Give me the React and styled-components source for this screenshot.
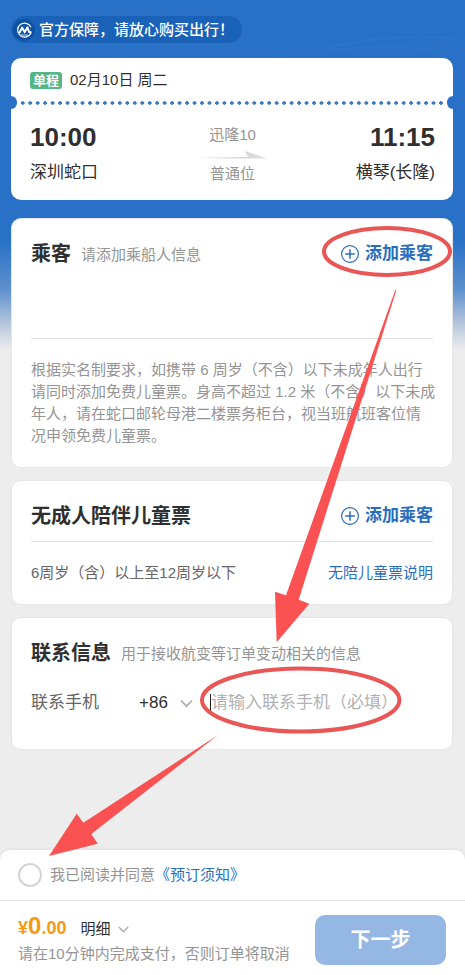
import React, { useState } from "react";
import styled, { createGlobalStyle } from "styled-components";

const blue = "#2871c7";
const linkBlue = "#2a6ebb";
const muted = "#949494";
const ink = "#2f2f2f";

const GlobalStyle = createGlobalStyle`
  *, *::before, *::after { box-sizing: border-box; }
  body {
    margin: 0;
    background: #ededed;
    color: ${ink};
    font-family: "Liberation Sans", "Noto Sans CJK SC", sans-serif;
    font-size: 15px;
    line-height: 22px;
  }
  h2, p { margin: 0; }
  button, input, select { font: inherit; color: inherit; margin: 0; padding: 0; border: 0; background: none; }
  button { cursor: pointer; }
  a { color: ${linkBlue}; text-decoration: none; }
`;

const Page = styled.div`
  position: relative;
  display: flex;
  flex-direction: column;
  min-height: 100vh;
  background: linear-gradient(${blue} 0, ${blue} 240px, #5f91cd 290px, #b9c8dc 325px, #ededed 350px);
`;

const Waves = styled.svg`
  position: absolute;
  top: 0;
  right: 0;
  width: 260px;
  height: 60px;
`;

const Content = styled.main`
  position: relative;
  flex: 1;
  display: flex;
  flex-direction: column;
  padding: 16px 12px 24px 11px;
`;

const Guarantee = styled.div`
  align-self: flex-start;
  display: flex;
  align-items: center;
  gap: 4px;
  height: 27px;
  padding-right: 8px;
  border-radius: 14px;
  background: #1a62b8;
  color: #fff;
  font-weight: 500;
`;

const Logo = styled.svg`
  width: 24px;
  height: 24px;
`;

const Ticket = styled.section`
  margin-top: 15px;
  padding-bottom: 9px;
  border-radius: 10px;
  background: #fff;
`;

const TripDate = styled.div`
  display: flex;
  align-items: center;
  gap: 8px;
  height: 38px;
  padding: 6px 19px 0;
`;

const Tag = styled.span`
  height: 17px;
  padding: 0 3px;
  border-radius: 3px;
  background: #55b584;
  color: #fff;
  font-size: 13px;
  font-weight: 700;
  line-height: 17px;
`;

const Perforation = styled.div`
  display: flex;
  align-items: center;
  justify-content: space-between;
  height: 13px;
  &::before, &::after {
    content: "";
    width: 6px;
    height: 13px;
    background: ${blue};
  }
  &::before { border-radius: 0 7px 7px 0; }
  &::after { border-radius: 7px 0 0 7px; }
`;

const Dots = styled.div`
  flex: 1;
  height: 4px;
  margin: 0 2px;
  background: radial-gradient(circle at center, #3a78c0 50%, transparent 60%) 0 0 / calc(100% / 57) 4px;
  background: radial-gradient(circle 2px at center, #3a78c0 75%, transparent) 0 0 / calc(100% / 57) 4px;
`;

const Route = styled.div`
  display: grid;
  grid-template-columns: 1fr 70px 1fr;
  padding: 10px 18px 0 19px;
`;

const Stop = styled.div`
  text-align: ${(p) => (p.$end ? "right" : "left")};
`;

const Time = styled.div`
  font-size: 26px;
  font-weight: 700;
  line-height: 36px;
`;

const Port = styled.div`
  font-size: 17px;
  line-height: 36px;
`;

const Vessel = styled.div`
  display: flex;
  flex-direction: column;
  align-items: center;
  justify-content: space-between;
  padding: 5px 0 6px;
  color: ${muted};
`;

const RouteArrow = styled.svg`
  width: 70px;
  height: 8px;
`;

const Panel = styled.section`
  margin-top: ${(p) => p.$gap}px;
  padding: 21px 19px ${(p) => p.$bottom}px;
  border: 1px solid #e4e6e8;
  border-radius: 10px;
  background: #fff;
`;

const PanelHead = styled.header`
  display: flex;
  align-items: center;
  gap: 10px;
  height: 28px;
`;

const Title = styled.h2`
  font-size: 20px;
  line-height: 28px;
  font-weight: 700;
`;

const Hint = styled.span`
  padding-top: 2px;
  color: ${muted};
`;

const AddButton = styled.button`
  display: flex;
  align-items: center;
  gap: 5px;
  margin-left: auto;
  color: ${linkBlue};
  font-size: 17px;
  font-weight: 700;
  line-height: 28px;
`;

const PlusIcon = styled.svg`
  width: 20px;
  height: 20px;
`;

const Divider = styled.hr`
  height: 1px;
  margin: ${(p) => p.$top}px 0 0;
  border: 0;
  background: #e1e1e1;
`;

const Notice = styled.p`
  margin-right: -3px;
  padding-top: 20px;
  color: ${muted};
  span { white-space: nowrap; }
`;

const AgeRow = styled.div`
  display: flex;
  justify-content: space-between;
  padding-top: 20px;
  color: #666;
`;

const ContactRow = styled.div`
  display: flex;
  align-items: center;
  height: 28px;
  margin-top: 22px;
  font-size: 17px;
  label { width: 108px; color: #666; }
`;

const CodePicker = styled.div`
  display: flex;
  align-items: center;
  width: 54px;
  margin-right: 17px;
`;

const CodeSelect = styled.select`
  appearance: none;
  flex: none;
  width: 54px;
  margin-right: -13px;
  outline: none;
`;

const Chevron = styled.svg`
  flex: none;
  width: ${(p) => (p.$small ? 11 : 13)}px;
  height: 9px;
  pointer-events: none;
`;

const PhoneInput = styled.input`
  flex: 1;
  min-width: 0;
  height: 18px;
  border-left: 1px solid #222;
  outline: none;
  &::placeholder { color: #b2b2b2; opacity: 1; }
`;

const Footer = styled.footer`
  position: sticky;
  bottom: 0;
  border-radius: 10px 10px 0 0;
  background: #fff;
  box-shadow: 0 -1px 4px rgba(0, 0, 0, 0.06);
`;

const Agreement = styled.div`
  display: flex;
  align-items: center;
  height: 51px;
  padding-left: 18px;
  border-bottom: 1px solid #e4e4e4;
  color: ${muted};
  label { padding-left: 8px; }
  a { color: #2670c4; }
`;

const Check = styled.input`
  appearance: none;
  width: 24px;
  height: 24px;
  border: 2px solid #d4d4d4;
  border-radius: 50%;
  &:checked { border-color: ${blue}; background: ${blue}; }
`;

const Checkout = styled.div`
  display: flex;
  justify-content: space-between;
  padding: 12px 19px 6px 18px;
`;

const PriceLine = styled.div`
  display: flex;
  align-items: baseline;
  height: 26px;
`;

const Price = styled.strong`
  color: #f39a12;
  font-size: 18px;
  line-height: 26px;
  span { font-size: 24px; }
`;

const DetailsButton = styled.button`
  display: flex;
  align-items: center;
  gap: 8px;
  margin-left: 14px;
`;

const PayNote = styled.p`
  color: ${muted};
  line-height: 30px;
`;

const NextButton = styled.button`
  width: 131px;
  height: 50px;
  margin-top: 2px;
  border-radius: 10px;
  background: #94b7e4;
  color: #fff;
  font-size: 20px;
  font-weight: 700;
`;

const Guides = styled.svg`
  position: absolute;
  top: 0;
  left: 0;
  width: 465px;
  height: 975px;
  pointer-events: none;
`;

function AddPassenger() {
  return (
    <AddButton type="button">
      <PlusIcon viewBox="0 0 20 20" fill="none" stroke="currentColor" aria-hidden="true">
        <circle cx="10" cy="10" r="8.4" strokeWidth="1.2" />
        <path d="M10 5.2V14.8M5.2 10H14.8" strokeWidth="1.5" />
      </PlusIcon>
      添加乘客
    </AddButton>
  );
}

function DownIcon({ small }) {
  return (
    <Chevron $small={small} viewBox="0 0 13 9" fill="none" stroke="#adadad" strokeWidth="1.7" aria-hidden="true">
      <path d="M1 1.5L6.5 7.2L12 1.5" />
    </Chevron>
  );
}

export default function App() {
  const [agreed, setAgreed] = useState(false);
  const [phone, setPhone] = useState("");

  return (
    <>
      <GlobalStyle />
      <Page>
        <Waves viewBox="0 0 260 60" fill="none" stroke="#5590d4" strokeOpacity="0.22" aria-hidden="true">
          <path d="M120 48C165 38 205 34 260 39" />
          <path d="M70 54C140 47 200 44 260 53" strokeOpacity="0.12" />
        </Waves>
        <Content>
          <Guarantee>
            <Logo viewBox="0 0 24 24" fill="none" aria-hidden="true">
              <circle cx="13" cy="12" r="11" fill="#0e51a2" />
              <path d="M20 9.2A7 7 0 1 0 20 15" stroke="#fff" strokeWidth="1.2" />
              <path d="M8.2 15.2L11.2 9.6L13.7 14.2L16.4 9.3L18.2 14.2H20.5" stroke="#fff" strokeWidth="1.9" strokeLinejoin="round" />
              <path d="M9.5 17H16.8" stroke="#fff" strokeWidth="0.8" />
            </Logo>
            官方保障，请放心购买出行！
          </Guarantee>

          <Ticket>
            <TripDate>
              <Tag>单程</Tag>
              <span>02月10日 周二</span>
            </TripDate>
            <Perforation><Dots /></Perforation>
            <Route>
              <Stop>
                <Time>10:00</Time>
                <Port>深圳蛇口</Port>
              </Stop>
              <Vessel>
                <span>迅隆10</span>
                <RouteArrow viewBox="0 0 70 8" aria-hidden="true">
                  <defs>
                    <linearGradient id="routeFade">
                      <stop offset="0" stopColor="#d6d6d6" stopOpacity="0" />
                      <stop offset="0.6" stopColor="#d6d6d6" />
                      <stop offset="1" stopColor="#dedede" />
                    </linearGradient>
                  </defs>
                  <path d="M0 6H50L47 0L69 7.5H0Z" fill="url(#routeFade)" />
                </RouteArrow>
                <span>普通位</span>
              </Vessel>
              <Stop $end>
                <Time>11:15</Time>
                <Port>横琴(长隆)</Port>
              </Stop>
            </Route>
          </Ticket>

          <Panel $gap={18} $bottom={20}>
            <PanelHead>
              <Title>乘客</Title>
              <Hint>请添加乘船人信息</Hint>
              <AddPassenger />
            </PanelHead>
            <Divider $top={70} />
            <Notice>
              根据实名制要求，如携带 6 周岁（不含）以下未成年人出行请同时添加免费儿童票。身高不超过 1.2 米（不含）以下未成年人，请在蛇口邮轮母港二楼票务柜台，视当班航班客位情<span>况申领</span>免费儿童票。
            </Notice>
          </Panel>

          <Panel $gap={12} $bottom={20}>
            <PanelHead>
              <Title>无成人陪伴儿童票</Title>
              <AddPassenger />
            </PanelHead>
            <Divider $top={11} />
            <AgeRow>
              <span>6周岁（含）以上至12周岁以下</span>
              <a href="#child-ticket">无陪儿童票说明</a>
            </AgeRow>
          </Panel>

          <Panel $gap={12} $bottom={32}>
            <PanelHead>
              <Title>联系信息</Title>
              <Hint>用于接收航变等订单变动相关的信息</Hint>
            </PanelHead>
            <ContactRow>
              <label htmlFor="phone">联系手机</label>
              <CodePicker>
                <CodeSelect aria-label="区号" defaultValue="+86">
                  <option>+86</option>
                </CodeSelect>
                <DownIcon />
              </CodePicker>
              <PhoneInput
                id="phone"
                type="tel"
                placeholder="请输入联系手机（必填）"
                value={phone}
                onChange={(e) => setPhone(e.target.value)}
              />
            </ContactRow>
          </Panel>
        </Content>

        <Footer>
          <Agreement>
            <Check id="agree" type="checkbox" checked={agreed} onChange={(e) => setAgreed(e.target.checked)} />
            <label htmlFor="agree">我已阅读并同意</label>
            <a href="#terms">《预订须知》</a>
          </Agreement>
          <Checkout>
            <div>
              <PriceLine>
                <Price>¥<span>0</span>.00</Price>
                <DetailsButton type="button">明细<DownIcon small /></DetailsButton>
              </PriceLine>
              <PayNote>请在10分钟内完成支付，否则订单将取消</PayNote>
            </div>
            <NextButton type="button">下一步</NextButton>
          </Checkout>
        </Footer>

        <Guides viewBox="0 0 465 975" fill="#fa5252" aria-hidden="true">
          <g fill="none" stroke="#e95656" strokeWidth="4">
            <ellipse cx="387" cy="251.5" rx="63" ry="23.5" />
            <ellipse cx="300.7" cy="700" rx="98.7" ry="31.5" />
          </g>
          <path d="M395.3 290L396.3 290.4L298.7 599.7L309.3 603.7L276.7 642.3L275 591.7L286 595.3Z" />
          <path d="M218 735L91.3 834L97.7 843.7L49 856L76.7 813.7L83.3 822.7Z" />
        </Guides>
      </Page>
    </>
  );
}
